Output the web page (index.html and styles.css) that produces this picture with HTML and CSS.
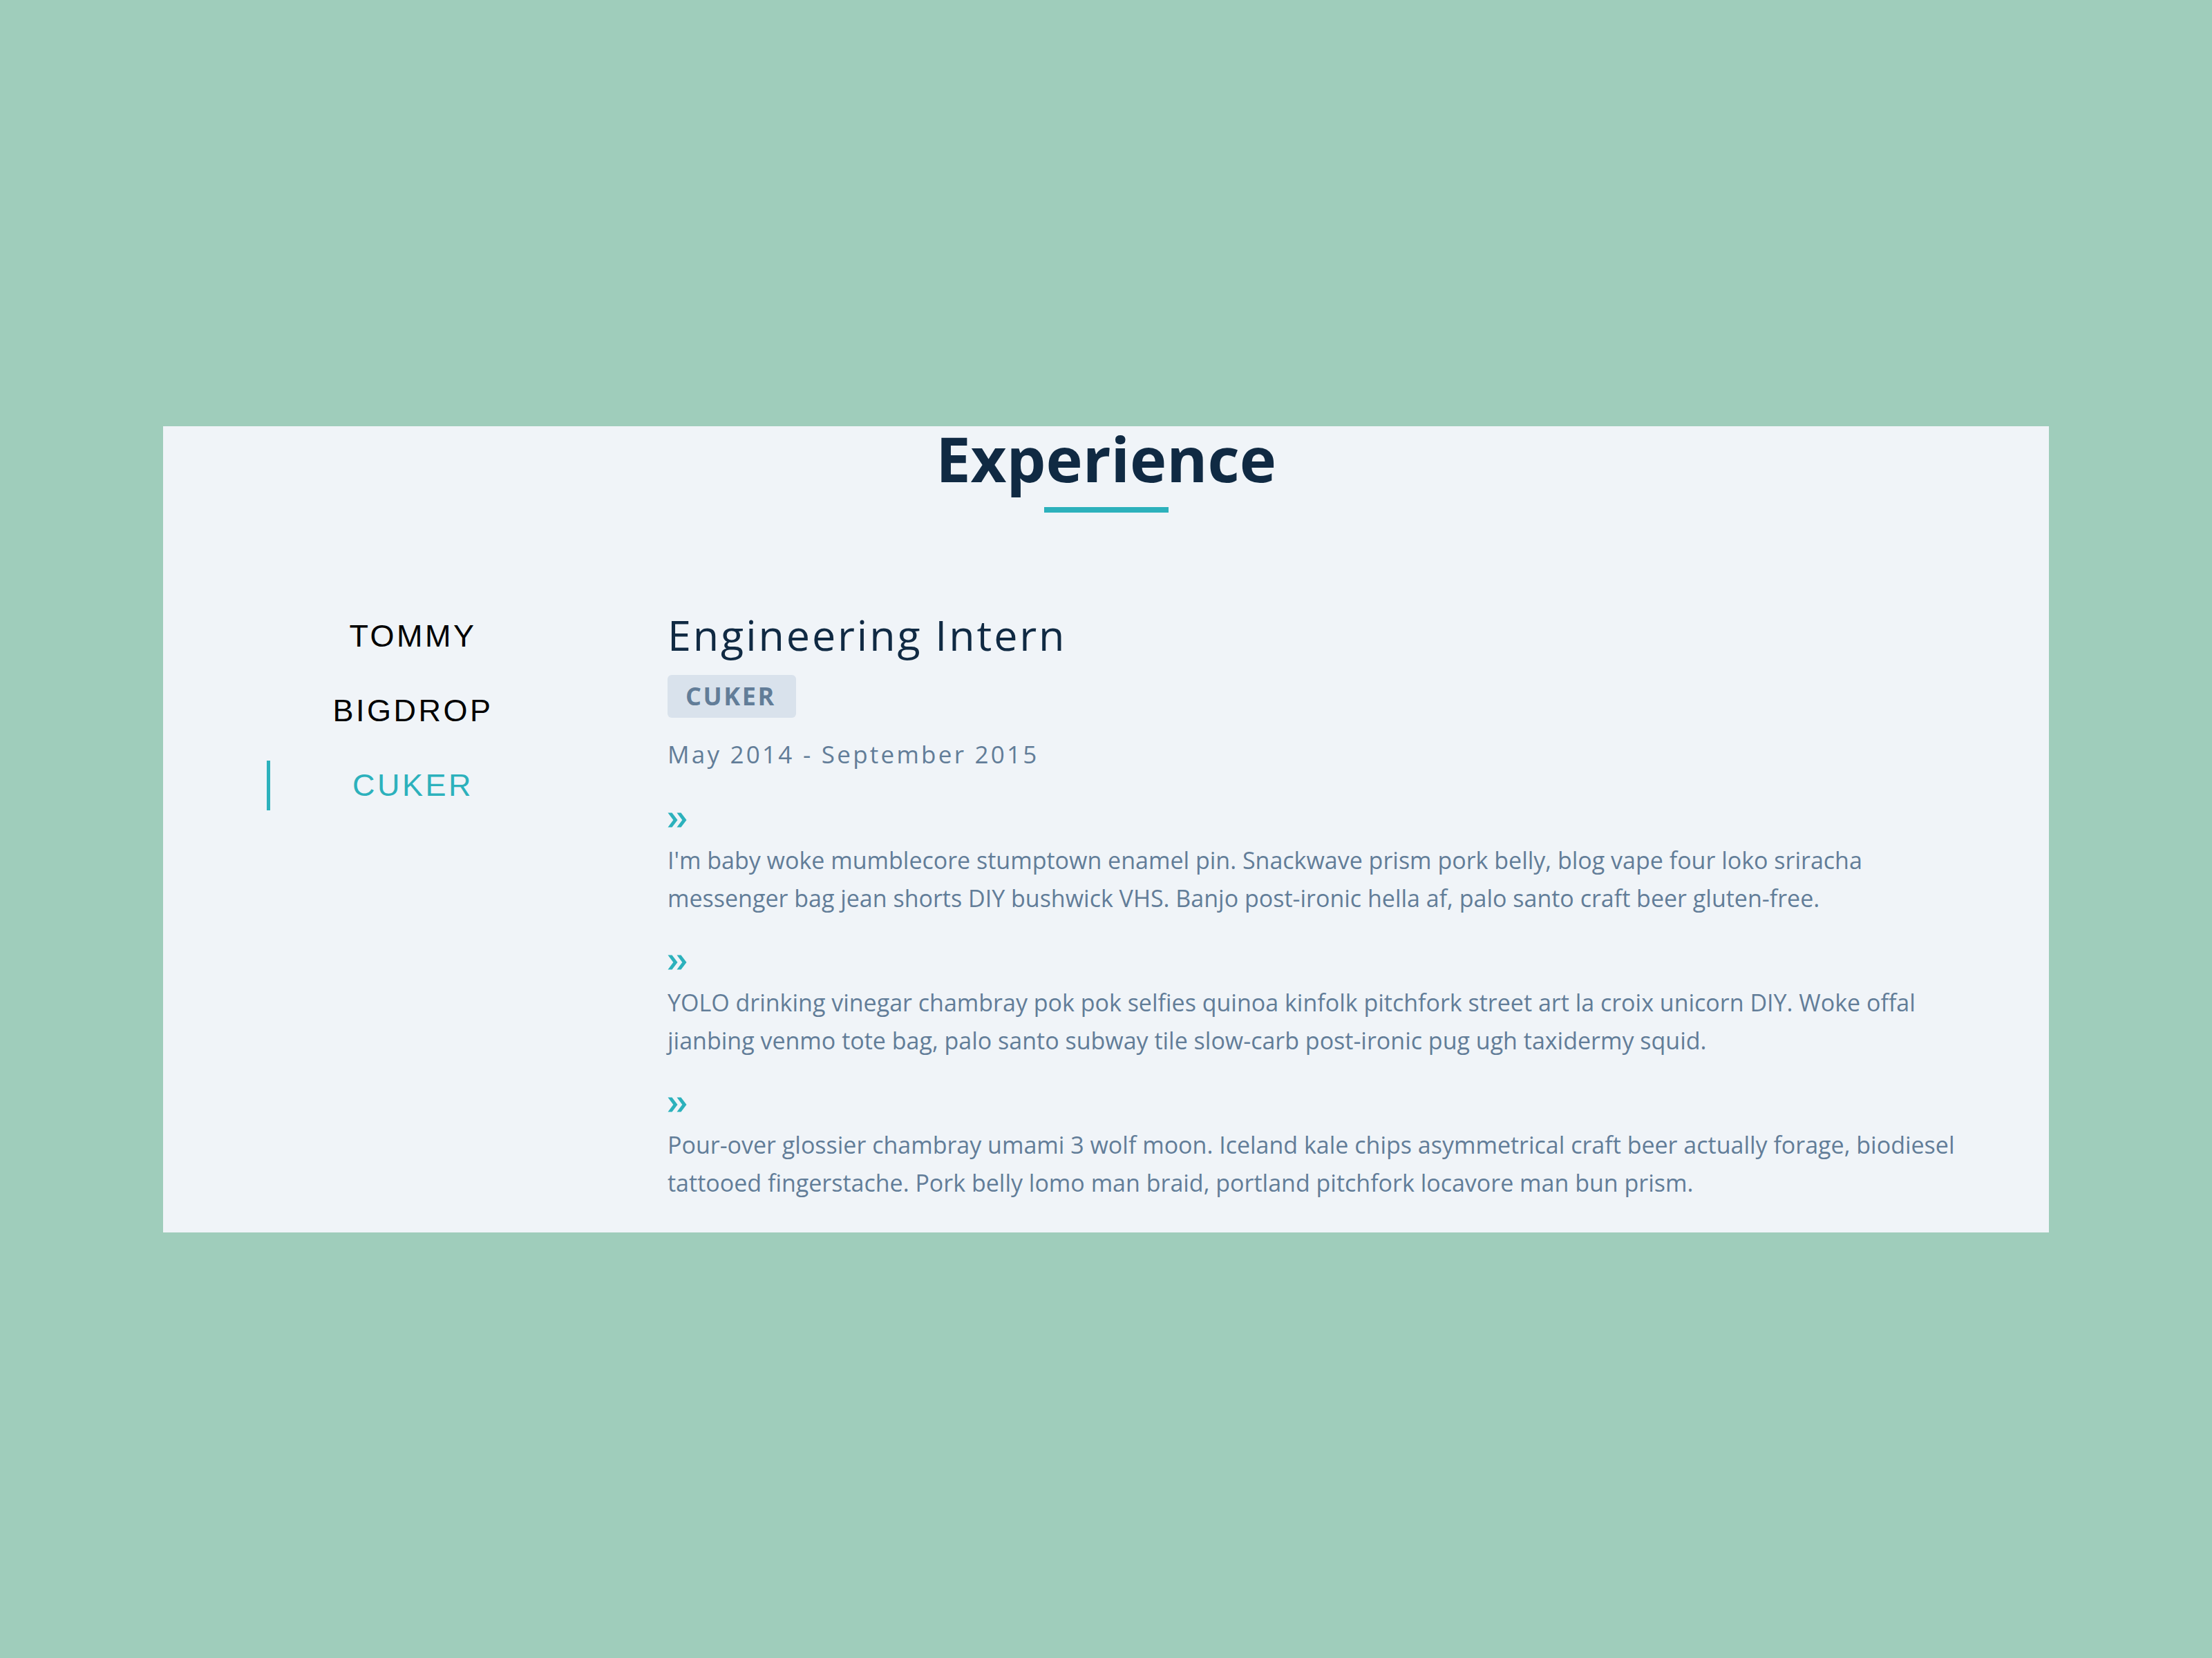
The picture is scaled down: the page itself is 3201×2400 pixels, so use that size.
FILE: index.html
```html
<!DOCTYPE html>
<html lang="en">
<head>
<meta charset="utf-8">
<title>Experience</title>
<link rel="stylesheet" href="styles.css">
</head>
<body>
<section class="card">
  <header class="head">
    <h2 class="title">Experience</h2>
    <span class="rule"></span>
  </header>
  <div class="content">
    <nav class="tabs">
      <button class="tab">TOMMY</button>
      <button class="tab">BIGDROP</button>
      <button class="tab is-active">CUKER</button>
    </nav>
    <article class="job">
      <h3 class="role">Engineering Intern</h3>
      <span class="badge">CUKER</span>
      <p class="dates">May 2014 - September 2015</p>
      <ul class="duties">
        <li class="duty">
          <svg class="chev" viewBox="0 0 28 22" width="28" height="22" aria-hidden="true"><path d="M0.5 0.5h6L14.5 11 6.5 21.5h-6L8.3 11z"/><path d="M13.5 0.5h6L27.5 11 19.5 21.5h-6L21.3 11z"/></svg>
          <p class="text">I'm baby woke mumblecore stumptown enamel pin. Snackwave prism pork belly, blog vape four loko sriracha<br>messenger bag jean shorts DIY bushwick VHS. Banjo post-ironic hella af, palo santo craft beer gluten-free.</p>
        </li>
        <li class="duty">
          <svg class="chev" viewBox="0 0 28 22" width="28" height="22" aria-hidden="true"><path d="M0.5 0.5h6L14.5 11 6.5 21.5h-6L8.3 11z"/><path d="M13.5 0.5h6L27.5 11 19.5 21.5h-6L21.3 11z"/></svg>
          <p class="text">YOLO drinking vinegar chambray pok pok selfies quinoa kinfolk pitchfork street art la croix unicorn DIY. Woke offal<br>jianbing venmo tote bag, palo santo subway tile slow-carb post-ironic pug ugh taxidermy squid.</p>
        </li>
        <li class="duty">
          <svg class="chev" viewBox="0 0 28 22" width="28" height="22" aria-hidden="true"><path d="M0.5 0.5h6L14.5 11 6.5 21.5h-6L8.3 11z"/><path d="M13.5 0.5h6L27.5 11 19.5 21.5h-6L21.3 11z"/></svg>
          <p class="text">Pour-over glossier chambray umami 3 wolf moon. Iceland kale chips asymmetrical craft beer actually forage, biodiesel<br>tattooed fingerstache. Pork belly lomo man braid, portland pitchfork locavore man bun prism.</p>
        </li>
      </ul>
    </article>
  </div>
</section>
</body>
</html>
```

FILE: styles.css
```css
* { box-sizing: border-box; }

html, body {
  margin: 0;
  padding: 0;
}

body {
  min-height: 100vh;
  background: #9fcdbb;
  display: flex;
  align-items: center;
  justify-content: center;
  font-family: "Open Sans", "Noto Sans", sans-serif;
}

.card {
  width: 2729px;
  background: #f0f4f8;
  padding: 1px 120px 44px 150px;
}

.head {
  display: flex;
  flex-direction: column;
  align-items: center;
  margin-left: -150px;
  margin-right: -120px;
}

.title {
  margin: 0;
  font-size: 90px;
  line-height: 90px;
  font-weight: 700;
  color: #102a43;
}

.rule {
  display: block;
  width: 180px;
  height: 8px;
  margin-top: 26px;
  background: #2cb1bc;
}

.content {
  display: flex;
  margin-top: 143px;
}

.tabs {
  width: 418px;
  flex: none;
  display: flex;
  flex-direction: column;
  gap: 36px;
}

.tab {
  height: 72px;
  padding: 0;
  border: 0;
  border-left: 5px solid transparent;
  background: transparent;
  font-family: "Liberation Sans", Arial, sans-serif;
  font-size: 45px;
  line-height: 72px;
  letter-spacing: 3.5px;
  color: #000;
  text-align: center;
  cursor: pointer;
}

.tab.is-active {
  border-left-color: #2cb1bc;
  color: #2cb1bc;
}

.job {
  margin-left: 162px;
  flex: 1;
}

.role {
  margin: 0;
  font-size: 61px;
  line-height: 68px;
  font-weight: 400;
  letter-spacing: 2.9px;
  color: #102a43;
}

.badge {
  display: block;
  width: fit-content;
  margin-top: 24px;
  height: 62px;
  padding: 0 29px 0 26px;
  border-radius: 6px;
  background: #d9e2ec;
  color: #627d98;
  font-size: 36px;
  font-weight: 700;
  line-height: 62px;
  letter-spacing: 2.6px;
}

.dates {
  margin: 27px 0 0;
  font-size: 35px;
  line-height: 52px;
  letter-spacing: 3.25px;
  color: #627d98;
}

.duties {
  list-style: none;
  margin: 58px 0 0;
  padding: 0;
  display: flex;
  flex-direction: column;
  gap: 54px;
}

.chev {
  display: block;
  fill: #2cb1bc;
}

.text {
  margin: 20px 0 0;
  font-size: 34px;
  line-height: 55px;
  color: #627d98;
  white-space: nowrap;
}
```
